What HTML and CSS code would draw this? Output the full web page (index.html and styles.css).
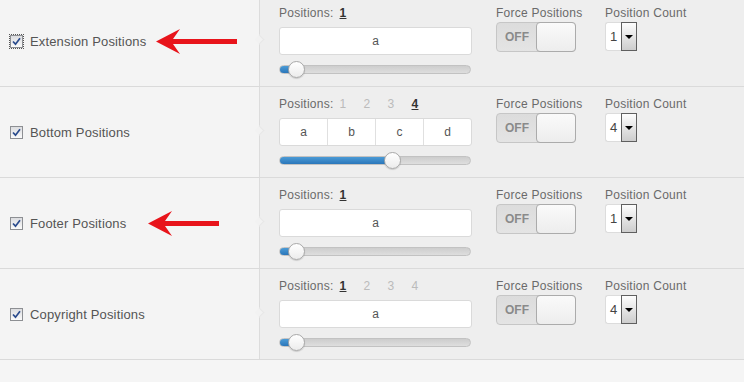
FILE: index.html
```html
<!DOCTYPE html>
<html lang="en">
<head>
  <meta charset="UTF-8">
  <meta name="viewport" content="width=device-width, initial-scale=1.0">
  <title>Positions</title>
  <link rel="stylesheet" href="styles.css">
</head>
<body>
  <div class="settings">

    <div class="row">
      <div class="row-label">
        <span class="check focused"><svg viewBox="0 0 11 11"><path d="M2 5.5 L4.5 8.2 L9 2.3"/></svg></span>
        <span class="name">Extension Positions</span>
        <svg class="arrow" width="81" height="25" viewBox="0 0 81 25"><polygon points="0,12.5 24,0 17,10 81,10 81,15 17,15 24,25"/></svg>
      </div>
      <div class="row-fields">
        <div class="positions">
          <div class="field-label">Positions: <span class="nums"><span class="num on">1</span></span></div>
          <div class="boxes"><span>a</span></div>
          <div class="slider"><div class="fill" style="width:16px"></div><div class="knob"></div></div>
        </div>
        <div class="force">
          <div class="field-label">Force Positions</div>
          <div class="toggle"><span class="off">OFF</span><span class="handle"></span></div>
        </div>
        <div class="count-field">
          <div class="field-label">Position Count</div>
          <div class="count"><span class="val">1</span><span class="btn"><i></i></span></div>
        </div>
      </div>
    </div>

    <div class="row">
      <div class="row-label">
        <span class="check"><svg viewBox="0 0 11 11"><path d="M2 5.5 L4.5 8.2 L9 2.3"/></svg></span>
        <span class="name">Bottom Positions</span>
      </div>
      <div class="row-fields">
        <div class="positions">
          <div class="field-label">Positions: <span class="nums"><span class="num">1</span><span class="num">2</span><span class="num">3</span><span class="num on">4</span></span></div>
          <div class="boxes"><span>a</span><span>b</span><span>c</span><span>d</span></div>
          <div class="slider"><div class="fill" style="width:112px"></div><div class="knob"></div></div>
        </div>
        <div class="force">
          <div class="field-label">Force Positions</div>
          <div class="toggle"><span class="off">OFF</span><span class="handle"></span></div>
        </div>
        <div class="count-field">
          <div class="field-label">Position Count</div>
          <div class="count"><span class="val">4</span><span class="btn"><i></i></span></div>
        </div>
      </div>
    </div>

    <div class="row">
      <div class="row-label">
        <span class="check"><svg viewBox="0 0 11 11"><path d="M2 5.5 L4.5 8.2 L9 2.3"/></svg></span>
        <span class="name">Footer Positions</span>
        <svg class="arrow arrow-far" width="71" height="25" viewBox="0 0 71 25"><polygon points="0,12.5 24,0 17,10 71,10 71,15 17,15 24,25"/></svg>
      </div>
      <div class="row-fields">
        <div class="positions">
          <div class="field-label">Positions: <span class="nums"><span class="num on">1</span></span></div>
          <div class="boxes"><span>a</span></div>
          <div class="slider"><div class="fill" style="width:16px"></div><div class="knob"></div></div>
        </div>
        <div class="force">
          <div class="field-label">Force Positions</div>
          <div class="toggle"><span class="off">OFF</span><span class="handle"></span></div>
        </div>
        <div class="count-field">
          <div class="field-label">Position Count</div>
          <div class="count"><span class="val">1</span><span class="btn"><i></i></span></div>
        </div>
      </div>
    </div>

    <div class="row">
      <div class="row-label">
        <span class="check"><svg viewBox="0 0 11 11"><path d="M2 5.5 L4.5 8.2 L9 2.3"/></svg></span>
        <span class="name">Copyright Positions</span>
      </div>
      <div class="row-fields">
        <div class="positions">
          <div class="field-label">Positions: <span class="nums"><span class="num on">1</span><span class="num">2</span><span class="num">3</span><span class="num">4</span></span></div>
          <div class="boxes"><span>a</span></div>
          <div class="slider"><div class="fill" style="width:16px"></div><div class="knob"></div></div>
        </div>
        <div class="force">
          <div class="field-label">Force Positions</div>
          <div class="toggle"><span class="off">OFF</span><span class="handle"></span></div>
        </div>
        <div class="count-field">
          <div class="field-label">Position Count</div>
          <div class="count"><span class="val">4</span><span class="btn"><i></i></span></div>
        </div>
      </div>
    </div>

  </div>
</body>
</html>
```

FILE: styles.css
```css
body {
  margin: 0;
  font-family: "Liberation Sans", Arial, sans-serif;
  background-color: #f5f5f5;
  overflow: hidden;
}
.settings {
  margin-top: -4px;
}
.row {
  display: flex;
  height: 90px;
  border-bottom: 1px solid #dadada;
}
.row-label {
  position: relative;
  width: 260px;
  flex: none;
  box-sizing: border-box;
  display: flex;
  align-items: center;
  padding-left: 10px;
  background-color: #f4f4f4;
  border-right: 1px solid #dcdcdc;
  font-size: 13px;
  letter-spacing: 0.15px;
  color: #555;
}
.row-label::after {
  content: "";
  position: absolute;
  right: -4px;
  top: 50%;
  width: 6px;
  height: 6px;
  margin-top: -5px;
  transform: rotate(45deg);
  background-color: #f2f2f2;
  border-top: 1px solid #e6e6e6;
  border-right: 1px solid #e6e6e6;
}
.check {
  width: 11px;
  height: 11px;
  flex: none;
  margin-right: 7px;
  border: 1px solid #8d8f93;
  background: linear-gradient(#dcdde0, #fbfbfb);
  display: flex;
}
.check svg {
  width: 11px;
  height: 11px;
}
.check path {
  fill: none;
  stroke: #2a4b8d;
  stroke-width: 1.7;
}
.check.focused {
  outline: 1px dotted #555;
  outline-offset: 0;
}
.arrow {
  flex: none;
  margin-left: 10px;
  fill: #e8141b;
}
.arrow-far {
  margin-left: 22px;
}
.row-fields {
  flex: 1;
  display: flex;
  gap: 24px;
  padding: 10px 0 0 19px;
  background-color: #eeeeee;
}
.field-label {
  display: flex;
  font-size: 12px;
  line-height: 15px;
  letter-spacing: 0.25px;
  color: #6a6a6a;
  white-space: nowrap;
}
.positions {
  width: 193px;
}
.nums {
  display: flex;
  margin-left: 6px;
}
.num {
  width: 24px;
  color: #bbb;
}
.num.on {
  color: #333;
  font-weight: bold;
  text-decoration: underline;
}
.boxes {
  display: flex;
  height: 28px;
  box-sizing: border-box;
  margin-top: 6px;
  background-color: #fff;
  border: 1px solid #dadada;
  border-radius: 3px;
}
.boxes span {
  flex: 1;
  text-align: center;
  line-height: 26px;
  font-size: 12px;
  color: #555;
  border-left: 1px solid #e0e0e0;
}
.boxes span:first-child {
  border-left: none;
}
.slider {
  display: flex;
  align-items: center;
  height: 7px;
  width: 190px;
  margin-top: 10px;
  background: linear-gradient(#cdcdcd, #dedede);
  border: 1px solid #c2c2c2;
  border-radius: 5px;
}
.fill {
  height: 100%;
  flex: none;
  background: linear-gradient(#4b9bd6, #2a76ba);
  border-radius: 4px 0 0 4px;
}
.knob {
  flex: none;
  width: 15px;
  height: 15px;
  margin-left: -8px;
  border-radius: 50%;
  background: linear-gradient(#ffffff, #ececec);
  border: 1px solid #a9a9a9;
  box-shadow: 0 1px 1px rgba(0, 0, 0, 0.15);
}
.force {
  width: 85px;
}
.toggle {
  display: flex;
  width: 80px;
  height: 30px;
  box-sizing: border-box;
  margin-top: 1px;
  background: linear-gradient(#dcdcdc, #e4e4e4);
  border: 1px solid #c6c6c6;
  border-radius: 4px;
}
.toggle .off {
  width: 40px;
  text-align: center;
  line-height: 28px;
  font-size: 12px;
  font-weight: bold;
  color: #8a8a8a;
}
.toggle .handle {
  flex: 1;
  margin: -1px;
  background: linear-gradient(#fafafa, #ededed);
  border: 1px solid #ababab;
  border-radius: 4px;
}
.count {
  display: flex;
  width: 32px;
  height: 29px;
  margin-top: 1px;
}
.count .val {
  flex: 1;
  padding-left: 4px;
  background-color: #fff;
  border: 1px solid #dcdcdc;
  border-right: none;
  border-radius: 3px 0 0 3px;
  font-size: 13px;
  line-height: 27px;
  color: #444;
}
.count .btn {
  width: 16px;
  flex: none;
  box-sizing: border-box;
  display: flex;
  align-items: center;
  justify-content: center;
  background: linear-gradient(#fdfdfd, #cdcdcd);
  border: 1px solid #5f5f5f;
}
.count .btn i {
  width: 0;
  height: 0;
  border-left: 4px solid transparent;
  border-right: 4px solid transparent;
  border-top: 4px solid #000;
}
```
